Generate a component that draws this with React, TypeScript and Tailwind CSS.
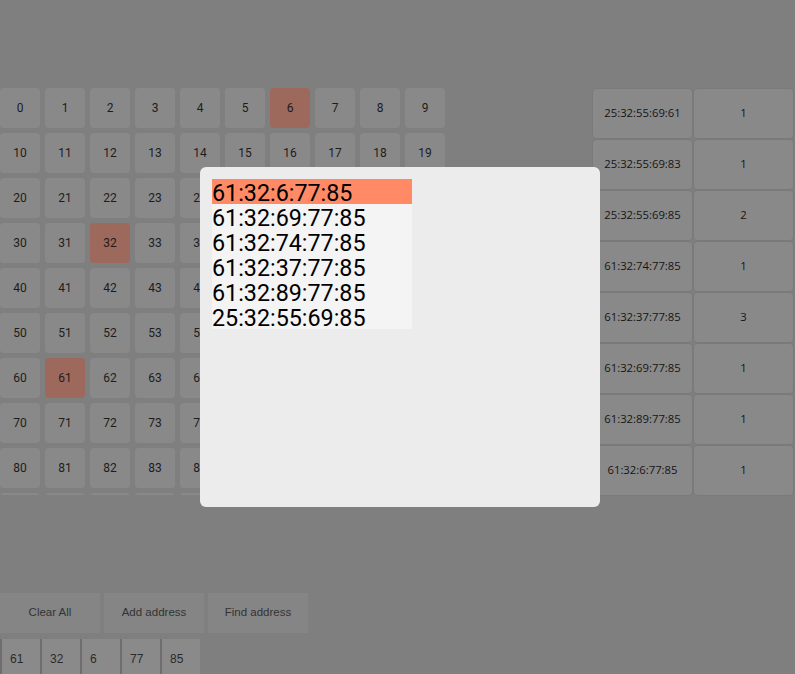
import React from 'react';

const selected = [6, 32, 61];

const counts: [string, number][] = [
  ['25:32:55:69:61', 1],
  ['25:32:55:69:83', 1],
  ['25:32:55:69:85', 2],
  ['61:32:74:77:85', 1],
  ['61:32:37:77:85', 3],
  ['61:32:69:77:85', 1],
  ['61:32:89:77:85', 1],
  ['61:32:6:77:85', 1],
];

const results = [
  '61:32:6:77:85',
  '61:32:69:77:85',
  '61:32:74:77:85',
  '61:32:37:77:85',
  '61:32:89:77:85',
  '25:32:55:69:85',
];

const address = ['61', '32', '6', '77', '85'];

export default function App() {
  return (
    <div className="relative w-[795px] h-[674px] overflow-hidden bg-[#7f7f7f] font-['Roboto',sans-serif]">
      <div className="pt-[88px] flex">
        {/* number pad */}
        <div className="w-[445px] h-[407px] overflow-hidden">
          <div className="grid grid-cols-[repeat(10,40px)] gap-[5px]">
            {Array.from({ length: 100 }, (_, i) => (
              <div
                key={i}
                className={`h-10 rounded-[4px] flex items-center justify-center text-[12px] text-[#1c1c1c] ${
                  selected.includes(i) ? 'bg-[#9d695d]' : 'bg-[#8a8989]'
                }`}
              >
                {i}
              </div>
            ))}
          </div>
        </div>

        {/* address counts */}
        <div className="ml-[147px] grid grid-cols-[101px_101px]">
          {counts.map(([addr, n]) => (
            <React.Fragment key={addr}>
              <div className="h-[51px] rounded-[4px] border border-[#7a7a7a] bg-[#8a8989] flex items-center justify-center text-[11.3px] text-[#151515] font-['Open_Sans',sans-serif]">
                {addr}
              </div>
              <div className="h-[51px] rounded-[4px] border border-[#7a7a7a] bg-[#8a8989] flex items-center justify-center text-[11.3px] text-[#151515] font-['Open_Sans',sans-serif]">
                {n}
              </div>
            </React.Fragment>
          ))}
        </div>
      </div>

      {/* actions */}
      <div className="mt-[97px] flex gap-1">
        {['Clear All', 'Add address', 'Find address'].map((t) => (
          <div
            key={t}
            className="w-[100px] h-10 bg-[#858585] flex items-center justify-center text-[11.5px] text-[#333333] font-['Liberation_Sans',sans-serif]"
          >
            {t}
          </div>
        ))}
      </div>

      <div className="mt-[6px] flex">
        {address.map((a, i) => (
          <div
            key={i}
            className="w-10 h-[40px] bg-[#8a8a8a] border-l-2 border-[#6e6e6e] pl-[8px] flex items-center text-[12px] text-[#2a2a2a] font-['Liberation_Sans',sans-serif]"
          >
            {a}
          </div>
        ))}
      </div>

      {/* results dialog */}
      <div className="absolute left-[200px] top-[167px] w-[400px] h-[340px] rounded-[6px] bg-[#ececec] p-3">
        <div className="w-[200px] bg-[#f4f4f4]">
          {results.map((r, i) => (
            <div
              key={r}
              className={`h-[25px] leading-[28px] text-[23.3px] text-black overflow-visible whitespace-nowrap ${
                i === 0 ? 'bg-[#ff8a65]' : ''
              }`}
            >
              {r}
            </div>
          ))}
        </div>
      </div>
    </div>
  );
}
